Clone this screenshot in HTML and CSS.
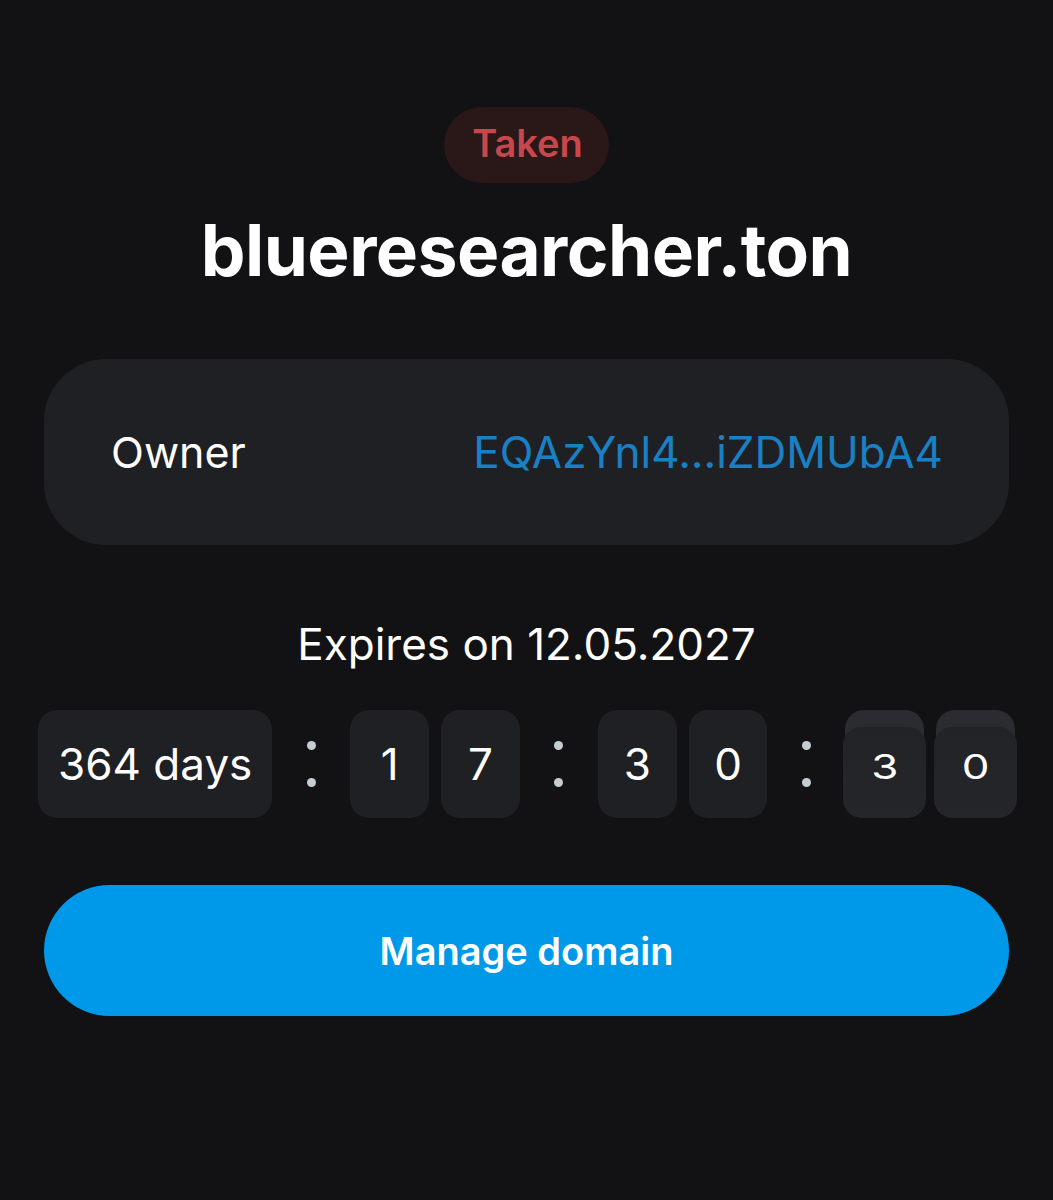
FILE: index.html
```html
<!DOCTYPE html>
<html lang="en">
<head>
<meta charset="utf-8">
<title>blueresearcher.ton</title>
<link rel="stylesheet" href="styles.css">
</head>
<body>
<main class="page">
  <div class="badge">Taken</div>
  <h1 class="title">blueresearcher.ton</h1>
  <section class="card">
    <span class="label">Owner</span>
    <a class="address" href="#">EQAzYnl4...iZDMUbA4</a>
  </section>
  <p class="expires">Expires on 12.05.2027</p>
  <div class="timer">
    <div class="box days">364 days</div>
    <div class="colon"><span></span><span></span></div>
    <div class="box digit">1</div>
    <div class="box digit">7</div>
    <div class="colon"><span></span><span></span></div>
    <div class="box digit">3</div>
    <div class="box digit">0</div>
    <div class="colon"><span></span><span></span></div>
    <div class="box digit flip"><span class="front"><span class="squash">3</span></span></div>
    <div class="box digit flip"><span class="front"><span class="squash">0</span></span></div>
  </div>
  <button class="manage">Manage domain</button>
</main>
</body>
</html>
```

FILE: styles.css
```css
html, body {
  margin: 0;
  padding: 0;
  background: #121214;
}
body {
  font-family: Inter, "Noto Sans", sans-serif;
  color: #ffffff;
}
.page {
  display: flex;
  flex-direction: column;
  align-items: center;
  padding: 107px 44px 0;
  min-height: 1200px;
  box-sizing: border-box;
}
.badge {
  height: 76px;
  padding: 0 26px 0 28px;
  border-radius: 38px;
  background: #2a1718;
  color: #c9474b;
  font-size: 38px;
  font-weight: 600;
  display: flex;
  align-items: center;
  justify-content: center;
  line-height: 1;
  padding-bottom: 4px;
  box-sizing: border-box;
}
.title {
  margin: 22px 0 0;
  font-size: 71px;
  font-weight: 700;
  line-height: 90px;
  letter-spacing: -0.5px;
}
.card {
  align-self: stretch;
  margin-top: 64px;
  height: 186px;
  border-radius: 62px;
  background: #1f2023;
  display: flex;
  align-items: center;
  justify-content: space-between;
  padding: 0 66px 0 67px;
  font-size: 43px;
}
.label {
  color: #ffffff;
}
.address {
  color: #1a80c6;
  text-decoration: none;
  font-size: 44px;
}
.expires {
  margin: 74px 0 0;
  font-size: 44px;
  line-height: 50px;
}
.timer {
  margin-top: 41px;
  align-self: stretch;
  margin-left: -6px;
  margin-right: -6px;
  display: flex;
  gap: 12px;
  height: 108px;
}
.box {
  background: #1f2023;
  border-radius: 19px;
  display: flex;
  align-items: center;
  justify-content: center;
  font-size: 44px;
  height: 108px;
}
.days {
  width: 235px;
}
.digit {
  width: 79px;
}
.colon {
  width: 54px;
  display: flex;
  flex-direction: column;
  align-items: center;
  justify-content: center;
  gap: 28px;
}
.colon span {
  width: 9px;
  height: 9px;
  border-radius: 50%;
  background: #c5cdd3;
}
.flip {
  position: relative;
  background: #2a2c31;
}
.flip .front {
  position: absolute;
  left: -2px;
  right: -2px;
  top: 17px;
  bottom: 0;
  background: linear-gradient(#222327, #25262a);
  border-radius: 18px 18px 19px 19px;
  display: flex;
  align-items: center;
  justify-content: center;
}
.squash {
  display: inline-block;
  transform: translateY(-6px) scaleY(0.78);
}
.manage {
  align-self: stretch;
  margin-top: 67px;
  height: 131px;
  border: none;
  border-radius: 66px;
  background: #0098e8;
  color: #ffffff;
  font-family: Inter, "Noto Sans", sans-serif;
  font-size: 38px;
  font-weight: 600;
}
```
